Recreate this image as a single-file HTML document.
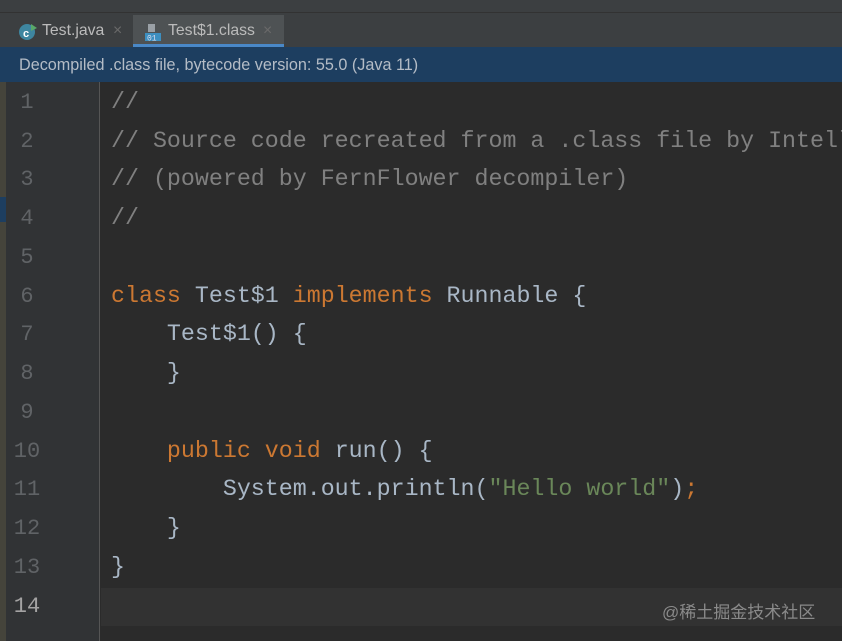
<!DOCTYPE html>
<html><head><meta charset="utf-8"><style>
*{margin:0;padding:0;box-sizing:border-box}
body{width:842px;height:641px;overflow:hidden;background:#2b2b2b;font-family:"Liberation Sans",sans-serif;position:relative}
.top{position:absolute;left:0;top:0;width:842px;height:13px;background:#3c3f41;border-bottom:1px solid #323232}
.tabs{position:absolute;left:0;top:13px;width:842px;height:34px;background:#3c3f41}
.tab{position:absolute;top:2px;height:32px;font-size:15.8px;color:#bbbbbb;line-height:31px}
.banner{position:absolute;left:0;top:47px;width:842px;height:35px;background:#1d3e60;color:#b4bcc6;font-size:16.2px;line-height:37px;padding-left:19px}
.strip{position:absolute;left:0;top:82px;width:6px;height:559px;background:#45443b}
.gutter{position:absolute;left:6px;top:82px;width:94px;height:559px;background:#313335;border-right:1px solid #555}
.ln{position:absolute;left:10px;width:34px;text-align:center;color:#606366;font:22px "Liberation Mono",monospace}
.ed{position:absolute;left:101px;top:82px;width:741px;height:559px;overflow:hidden}
.code{position:absolute;left:10px;font:23.3px "Liberation Mono",monospace;color:#a9b7c6;white-space:pre}
.c{color:#808080}.k{color:#cc7832}.s{color:#6a8759}
.cur{position:absolute;left:0;top:506px;width:741px;height:38px;background:#323232}
</style></head><body>
<div class="top"></div>
<div class="tabs">
 <div class="tab" style="left:12px;width:120px">
  <svg style="position:absolute;left:6px;top:7px" width="20" height="20"><circle cx="9" cy="10" r="8" fill="#3e86a0"/><text x="5" y="15" font-size="11" fill="#fff" font-family="Liberation Sans" font-weight="bold">c</text><path d="M13 2l6 4-6 3z" fill="#59a869"/></svg>
  <span style="position:absolute;left:30px">Test.java</span><span style="position:absolute;left:101px;color:#6a6a6a">×</span></div>
 <div class="tab" style="left:133px;width:151px;background:#4e5254;border-bottom:3px solid #4a88c7">
  <svg style="position:absolute;left:10px;top:7px" width="20" height="20"><path d="M5 2h7v8H5z" fill="#9aa0a6"/><rect x="2" y="11" width="16" height="8" fill="#3d8fc0"/><text x="4" y="18.5" font-size="8" fill="#dde" font-family="Liberation Mono">01</text></svg>
  <span style="position:absolute;left:35px">Test$1.class</span><span style="position:absolute;left:130px;color:#6a6a6a">×</span></div>
</div>
<div class="banner">Decompiled .class file, bytecode version: 55.0 (Java 11)</div>
<div class="strip"></div><div style="position:absolute;left:0;top:197px;width:6px;height:25px;background:#1d3e60"></div>
<div class="gutter"></div>
<div class="ln" style="top:90px">1</div><div class="ln" style="top:129px">2</div><div class="ln" style="top:167px">3</div><div class="ln" style="top:206px">4</div><div class="ln" style="top:245px">5</div><div class="ln" style="top:284px">6</div><div class="ln" style="top:322px">7</div><div class="ln" style="top:361px">8</div><div class="ln" style="top:400px">9</div><div class="ln" style="top:439px">10</div><div class="ln" style="top:477px">11</div><div class="ln" style="top:516px">12</div><div class="ln" style="top:555px">13</div><div class="ln" style="top:594px;color:#a4a3a3">14</div>
<div class="ed">
<div class="cur"></div>
<div class="code c" style="top:7px">//</div>
<div class="code c" style="top:46px">// Source code recreated from a .class file by IntelliJ IDEA</div>
<div class="code c" style="top:84px">// (powered by FernFlower decompiler)</div>
<div class="code c" style="top:123px">//</div>
<div class="code" style="top:201px"><span class="k">class</span> Test$1 <span class="k">implements</span> Runnable {</div>
<div class="code" style="top:239px">    Test$1() {</div>
<div class="code" style="top:278px">    }</div>
<div class="code" style="top:356px">    <span class="k">public void</span> run() {</div>
<div class="code" style="top:394px">        System.out.println(<span class="s">"Hello world"</span>)<span class="k">;</span></div>
<div class="code" style="top:433px">    }</div>
<div class="code" style="top:472px">}</div>
</div>
<div style="position:absolute;left:662px;top:598px;font:17px 'Liberation Sans','Noto Sans CJK SC',sans-serif;color:#8a8a8a">@稀土掘金技术社区</div>
</body></html>
